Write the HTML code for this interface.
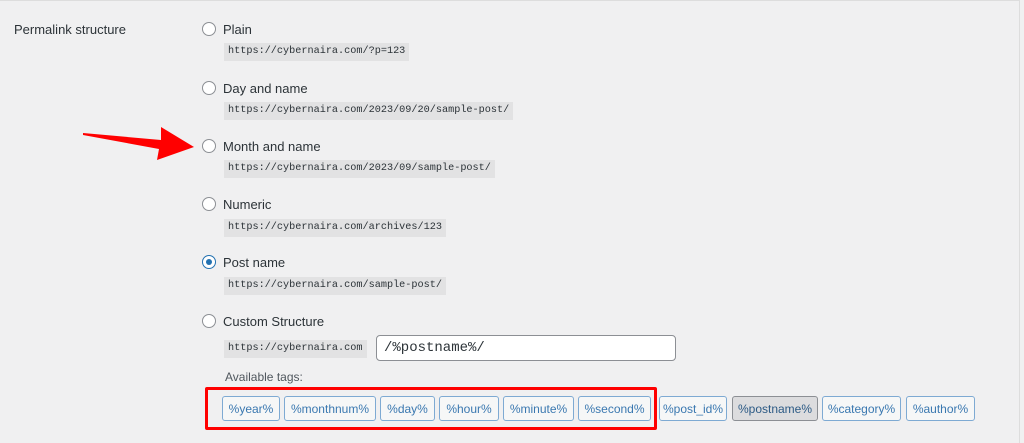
<!DOCTYPE html>
<html><head><meta charset="utf-8"><style>
body{margin:0;width:1024px;height:443px;background:#f0f0f1;font-family:"Liberation Sans",sans-serif;color:#1d2327;position:relative;overflow:hidden}
.frame{position:absolute;left:0;top:0;width:1020px;height:443px;border-top:1px solid #ddd;border-right:1px solid #ddd;box-sizing:border-box}
.a{position:absolute}
.lbl{font-size:13px;color:#2c3338}
.radio{position:absolute;width:12px;height:12px;border:1px solid #8c8f94;border-radius:50%;background:#fff}
.code{position:absolute;background:#e2e2e3;font-family:"Liberation Mono",monospace;font-size:10.2px;padding:3px 4px;color:#2c3338;line-height:12px}
.btn{position:absolute;top:396px;height:25px;border:1px solid #7eaad3;border-radius:3px;background:#f6f7f7;color:#3a78b0;font-size:12px;line-height:25px;text-align:center;box-sizing:border-box}
</style></head><body>
<div class="frame"></div>
<div class="a lbl" style="left:14px;top:22px;font-size:13px">Permalink structure</div>

<div class="radio" style="left:202px;top:22px"></div><div class="a lbl" style="left:223px;top:22px">Plain</div>
<div class="code" style="left:224px;top:43px">https://cybernaira.com/?p=123</div>

<div class="radio" style="left:202px;top:81px"></div><div class="a lbl" style="left:223px;top:81px">Day and name</div>
<div class="code" style="left:224px;top:102px">https://cybernaira.com/2023/09/20/sample-post/</div>

<div class="radio" style="left:202px;top:139px"></div><div class="a lbl" style="left:223px;top:139px">Month and name</div>
<div class="code" style="left:224px;top:160px">https://cybernaira.com/2023/09/sample-post/</div>

<div class="radio" style="left:202px;top:197px"></div><div class="a lbl" style="left:223px;top:197px">Numeric</div>
<div class="code" style="left:224px;top:219px">https://cybernaira.com/archives/123</div>

<div class="radio" style="left:202px;top:255px;border-color:#2271b1"><div style="position:absolute;left:3px;top:3px;width:6px;height:6px;border-radius:50%;background:#2271b1"></div></div><div class="a lbl" style="left:223px;top:255px">Post name</div>
<div class="code" style="left:224px;top:277px">https://cybernaira.com/sample-post/</div>

<div class="radio" style="left:202px;top:314px"></div><div class="a lbl" style="left:223px;top:314px">Custom Structure</div>
<div class="code" style="left:224px;top:340px">https://cybernaira.com</div>
<div class="a" style="left:376px;top:335px;width:300px;height:26px;background:#fff;border:1px solid #8c8f94;border-radius:4px;box-sizing:border-box;font-family:'Liberation Mono',monospace;font-size:14px;line-height:24px;padding-left:7px;color:#2c3338">/%postname%/</div>
<div class="a" style="left:225px;top:370px;font-size:12px;color:#50575e">Available tags:</div>

<div class="btn" style="left:222px;width:58px">%year%</div>
<div class="btn" style="left:284px;width:92px">%monthnum%</div>
<div class="btn" style="left:380px;width:55px">%day%</div>
<div class="btn" style="left:439px;width:60px">%hour%</div>
<div class="btn" style="left:503px;width:71px">%minute%</div>
<div class="btn" style="left:578px;width:73px">%second%</div>
<div class="btn" style="left:659px;width:68px">%post_id%</div>
<div class="btn" style="left:732px;width:86px;background:#dcdcde;border-color:#8c8f94;color:#2c5a85">%postname%</div>
<div class="btn" style="left:822px;width:79px">%category%</div>
<div class="btn" style="left:906px;width:69px">%author%</div>

<div class="a" style="left:205px;top:387px;width:452px;height:43px;border:3px solid #f00;box-sizing:border-box;border-radius:2px"></div>

<svg class="a" style="left:0;top:0" width="300" height="200"><polygon points="83,133 161,140 161,127 194,147 157,160 159,149 83,135" fill="#f00"/></svg>
</body></html>
